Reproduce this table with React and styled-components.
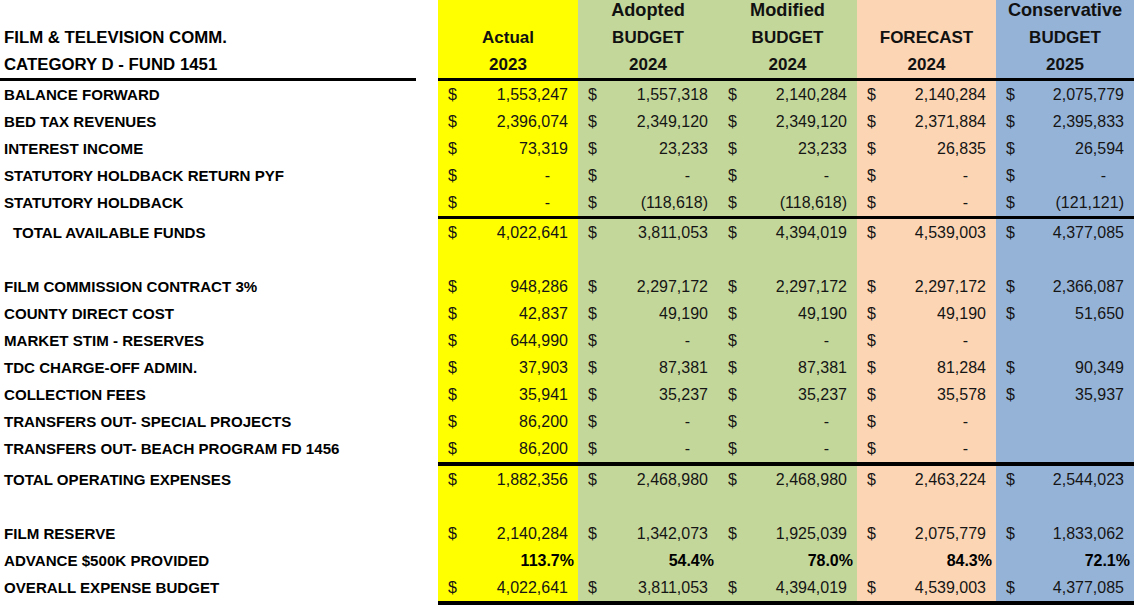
import React from "react";
import styled, { createGlobalStyle } from "styled-components";

const Global = createGlobalStyle`
  html, body { margin: 0; padding: 0; background: #fff; }
  body { font-family: "Liberation Sans", Arial, sans-serif; color: #000; overflow: hidden; }
`;

const COLS = "438px 140px 140px 139px 139px 138px";
const BG = ["#FFFF00", "#C4D79B", "#C4D79B", "#FCD5B4", "#95B3D7"];

const Sheet = styled.div`
  width: 1134px;
  margin-top: -3px;
`;

const Row = styled.div`
  display: grid;
  grid-template-columns: ${COLS};
  height: 27px;
`;

const RuleRow = styled.div`
  display: grid;
  grid-template-columns: ${COLS};
  height: ${(p) => p.$h || 3}px;
`;

const RuleLabel = styled.div`
  display: flex;
`;

const RuleLabelLine = styled.div`
  width: 416px;
  background: ${(p) => (p.$on ? "#000" : "transparent")};
`;

const RuleCell = styled.div`
  background: #000;
`;

const Label = styled.div`
  display: flex;
  align-items: center;
  padding-left: ${(p) => (p.$indent ? 13 : 4)}px;
  font-weight: 700;
  font-size: ${(p) => (p.$title ? 16.8 : 15.1)}px;
  white-space: nowrap;
`;

const HeadCell = styled.div`
  background: ${(p) => p.$bg};
  display: flex;
  align-items: center;
  justify-content: center;
  font-weight: 700;
  font-size: ${(p) => (p.$big ? 18.2 : 17)}px;
  color: #111;
  white-space: nowrap;
`;

const Cell = styled.div`
  background: ${(p) => p.$bg};
  display: flex;
  align-items: center;
  justify-content: space-between;
  padding: 0 ${(p) => (p.$pct ? 4 : 10)}px 0 10px;
  font-size: 16px;
  color: #151515;
  white-space: nowrap;
`;

const Dollar = styled.span``;

const Value = styled.span`
  font-weight: ${(p) => (p.$bold ? 700 : 400)};
  color: ${(p) => (p.$bold ? "#000" : "inherit")};
  padding-right: ${(p) => (p.$dash ? 18 : 0)}px;
`;

const header = [
  ["", "", "Adopted", "Modified", "", "Conservative"],
  ["FILM & TELEVISION COMM.", "Actual", "BUDGET", "BUDGET", "FORECAST", "BUDGET"],
  ["CATEGORY D - FUND 1451", "2023", "2024", "2024", "2024", "2025"],
];

const body = [
  { label: "BALANCE FORWARD", v: ["1,553,247", "1,557,318", "2,140,284", "2,140,284", "2,075,779"] },
  { label: "BED TAX REVENUES", v: ["2,396,074", "2,349,120", "2,349,120", "2,371,884", "2,395,833"] },
  { label: "INTEREST INCOME", v: ["73,319", "23,233", "23,233", "26,835", "26,594"] },
  { label: "STATUTORY HOLDBACK RETURN PYF", v: ["-", "-", "-", "-", "-"] },
  { label: "STATUTORY HOLDBACK", v: ["-", "(118,618)", "(118,618)", "-", "(121,121)"] },
  { rule: true },
  { label: "TOTAL AVAILABLE FUNDS", indent: true, v: ["4,022,641", "3,811,053", "4,394,019", "4,539,003", "4,377,085"] },
  { blank: true },
  { label: "FILM COMMISSION CONTRACT 3%", v: ["948,286", "2,297,172", "2,297,172", "2,297,172", "2,366,087"] },
  { label: "COUNTY DIRECT COST", v: ["42,837", "49,190", "49,190", "49,190", "51,650"] },
  { label: "MARKET STIM - RESERVES", v: ["644,990", "-", "-", "-", null] },
  { label: "TDC CHARGE-OFF ADMIN.", v: ["37,903", "87,381", "87,381", "81,284", "90,349"] },
  { label: "COLLECTION FEES", v: ["35,941", "35,237", "35,237", "35,578", "35,937"] },
  { label: "TRANSFERS OUT- SPECIAL PROJECTS", v: ["86,200", "-", "-", "-", null] },
  { label: "TRANSFERS OUT- BEACH PROGRAM FD 1456", v: ["86,200", "-", "-", "-", null] },
  { rule: true, h: 4 },
  { label: "TOTAL OPERATING EXPENSES", v: ["1,882,356", "2,468,980", "2,468,980", "2,463,224", "2,544,023"] },
  { blank: true },
  { label: "FILM RESERVE", v: ["2,140,284", "1,342,073", "1,925,039", "2,075,779", "1,833,062"] },
  { label: "ADVANCE $500K PROVIDED", pct: ["113.7%", "54.4%", "78.0%", "84.3%", "72.1%"] },
  { label: "OVERALL EXPENSE BUDGET", v: ["4,022,641", "3,811,053", "4,394,019", "4,539,003", "4,377,085"] },
  { rule: true, h: 4 },
];

function Rule({ withLabel, h }) {
  return (
    <RuleRow $h={h}>
      <RuleLabel>
        <RuleLabelLine $on={withLabel} />
      </RuleLabel>
      {BG.map((_, i) => (
        <RuleCell key={i} />
      ))}
    </RuleRow>
  );
}

export default function App() {
  return (
    <>
      <Global />
      <Sheet>
        {header.map((r, ri) => (
          <Row key={"h" + ri}>
            <Label $title>{r[0]}</Label>
            {r.slice(1).map((t, i) => (
              <HeadCell key={i} $bg={BG[i]} $big={ri === 0}>
                {t}
              </HeadCell>
            ))}
          </Row>
        ))}
        <Rule withLabel />
        {body.map((r, ri) => {
          if (r.rule) return <Rule key={ri} h={r.h} />;
          if (r.blank)
            return (
              <Row key={ri}>
                <Label />
                {BG.map((bg, i) => (
                  <Cell key={i} $bg={bg} />
                ))}
              </Row>
            );
          if (r.pct)
            return (
              <Row key={ri}>
                <Label>{r.label}</Label>
                {r.pct.map((p, i) => (
                  <Cell key={i} $bg={BG[i]} $pct>
                    <Dollar />
                    <Value $bold>{p}</Value>
                  </Cell>
                ))}
              </Row>
            );
          return (
            <Row key={ri}>
              <Label $indent={r.indent}>{r.label}</Label>
              {r.v.map((v, i) => (
                <Cell key={i} $bg={BG[i]}>
                  {v !== null && (
                    <>
                      <Dollar>$</Dollar>
                      <Value $dash={v === "-"}>{v}</Value>
                    </>
                  )}
                </Cell>
              ))}
            </Row>
          );
        })}
      </Sheet>
    </>
  );
}
